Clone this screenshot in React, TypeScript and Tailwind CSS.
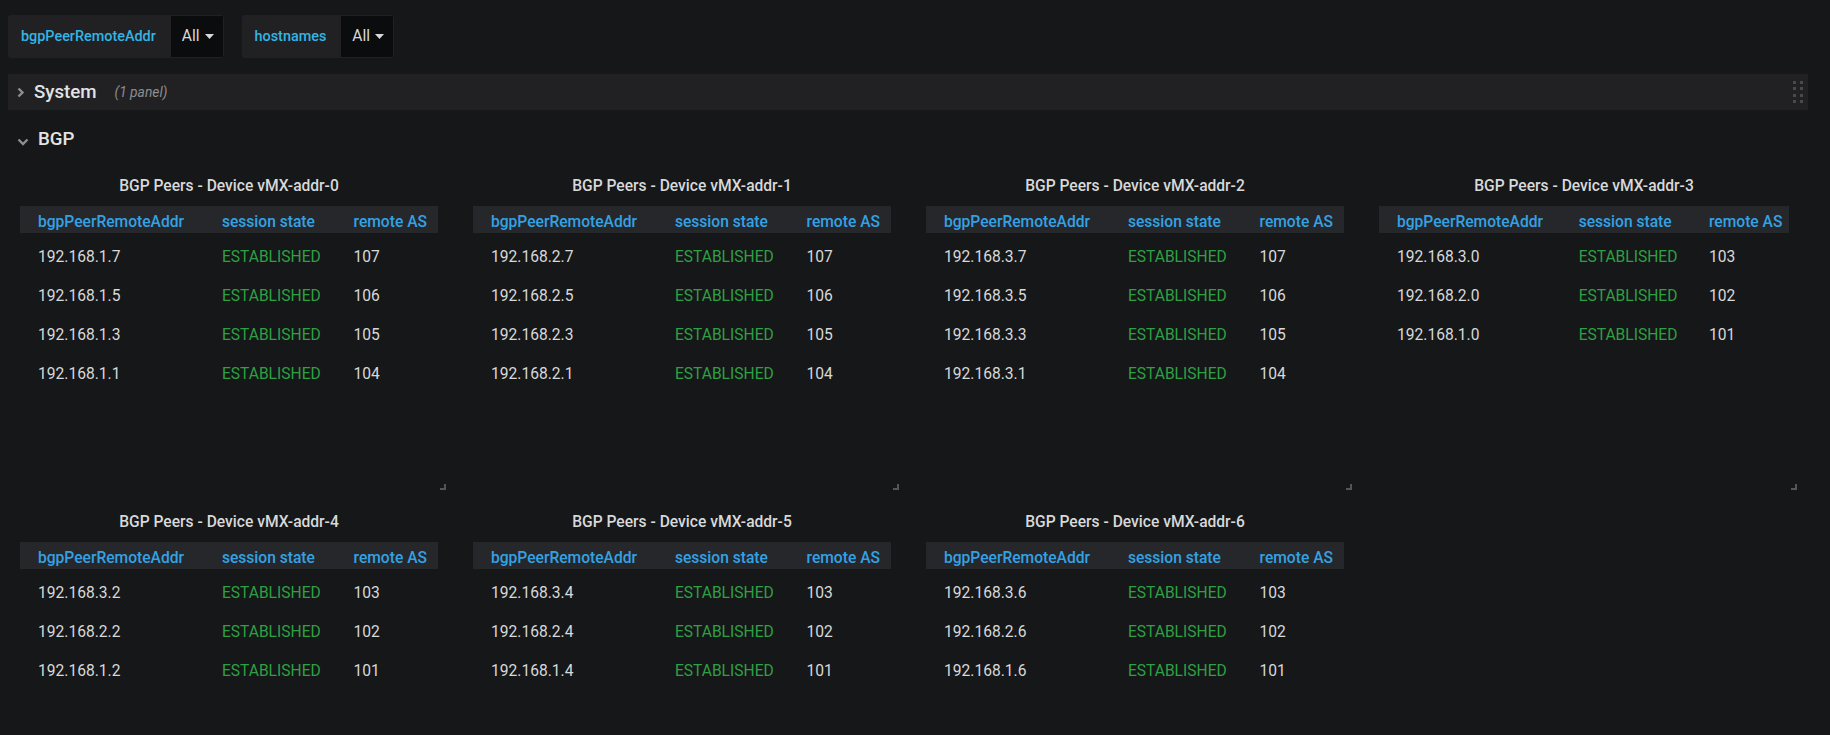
import React from 'react'

type Peer = { addr: string; as: string }

type Panel = { name: string; peers: Peer[] }

const panels: Panel[] = [
  {
    name: 'vMX-addr-0',
    peers: [
      { addr: '192.168.1.7', as: '107' },
      { addr: '192.168.1.5', as: '106' },
      { addr: '192.168.1.3', as: '105' },
      { addr: '192.168.1.1', as: '104' },
    ],
  },
  {
    name: 'vMX-addr-1',
    peers: [
      { addr: '192.168.2.7', as: '107' },
      { addr: '192.168.2.5', as: '106' },
      { addr: '192.168.2.3', as: '105' },
      { addr: '192.168.2.1', as: '104' },
    ],
  },
  {
    name: 'vMX-addr-2',
    peers: [
      { addr: '192.168.3.7', as: '107' },
      { addr: '192.168.3.5', as: '106' },
      { addr: '192.168.3.3', as: '105' },
      { addr: '192.168.3.1', as: '104' },
    ],
  },
  {
    name: 'vMX-addr-3',
    peers: [
      { addr: '192.168.3.0', as: '103' },
      { addr: '192.168.2.0', as: '102' },
      { addr: '192.168.1.0', as: '101' },
    ],
  },
  {
    name: 'vMX-addr-4',
    peers: [
      { addr: '192.168.3.2', as: '103' },
      { addr: '192.168.2.2', as: '102' },
      { addr: '192.168.1.2', as: '101' },
    ],
  },
  {
    name: 'vMX-addr-5',
    peers: [
      { addr: '192.168.3.4', as: '103' },
      { addr: '192.168.2.4', as: '102' },
      { addr: '192.168.1.4', as: '101' },
    ],
  },
  {
    name: 'vMX-addr-6',
    peers: [
      { addr: '192.168.3.6', as: '103' },
      { addr: '192.168.2.6', as: '102' },
      { addr: '192.168.1.6', as: '101' },
    ],
  },
]

function Caret() {
  return (
    <svg width="9" height="5" viewBox="0 0 9 5" className="ml-[5px]">
      <path d="M0 0h9L4.5 5z" fill="#d8d9da" />
    </svg>
  )
}

function VariablePicker({ label }: { label: string }) {
  return (
    <div className="flex h-[43px] rounded-[3px] overflow-hidden">
      <div className="flex items-center bg-[#212124] pl-[13px] pr-[14px] text-[14.4px] font-medium text-[#33b5e5]">
        {label}
      </div>
      <div className="flex items-center bg-[#0b0c0e] border border-[#212124] pl-[11px] pr-[9px] text-[15.6px] text-[#d8d9da]">
        All
        <Caret />
      </div>
    </div>
  )
}

function BgpTable({ panel, last }: { panel: Panel; last: boolean }) {
  // the last column is a bit narrower, its columns shift slightly
  const c1 = last ? 'w-[44.3%]' : 'w-[44%]'
  const c2 = last ? 'w-[31.8%]' : 'w-[31.5%]'
  return (
    <div className="relative h-[322px] px-3 pr-[9px]">
      <div className="flex h-[38px] items-center justify-center text-[15.6px] font-medium text-[#d8d9da]">
        BGP Peers - Device {panel.name}
      </div>
      <div className="flex h-[27px] pt-[6px] items-center bg-[#26272a] text-[15.6px] font-medium text-[#33a2e5]">
        <div className={`${c1} pl-[18px]`}>bgpPeerRemoteAddr</div>
        <div className={`${c2} pl-[18px]`}>session state</div>
        <div className="flex-1 pl-[18px]">remote AS</div>
      </div>
      <div className="mt-[5px]">
        {panel.peers.map((p) => (
          <div key={p.addr} className="flex h-[39px] items-center text-[15.6px]">
            <div className={`${c1} pl-[18px] text-[#d8d9da]`}>{p.addr}</div>
            <div className={`${c2} pl-[18px] text-[#2ea043]`}>ESTABLISHED</div>
            <div className="flex-1 pl-[18px] text-[#d8d9da]">{p.as}</div>
          </div>
        ))}
      </div>
      {/* resize handle */}
      <div className="absolute right-[1px] bottom-0 w-[6px] h-[6px] border-r-2 border-b-2 border-[#555558]" />
    </div>
  )
}

export default function App() {
  return (
    <div className="min-h-screen bg-[#161719] font-['Roboto',sans-serif] text-[#d8d9da]">
      <div className="w-[1808px] pl-2 pt-[15px]">
        {/* Variables */}
        <div className="flex gap-[18px]">
          <VariablePicker label="bgpPeerRemoteAddr" />
          <VariablePicker label="hostnames" />
        </div>

        {/* Collapsed row */}
        <div className="mt-4 flex h-[36px] items-center bg-[#212124]">
          <svg width="8" height="11" viewBox="0 0 8 11" className="ml-[9px]">
            <path d="M1.5 1.5l4 4-4 4" stroke="#8e8e90" strokeWidth="2.4" fill="none" />
          </svg>
          <span className="ml-[9px] text-[18.7px] font-medium text-[#e3e3e4]">System</span>
          <span className="ml-[18px] text-[13.8px] italic text-[#8e8e90]">(1 panel)</span>
          <div className="ml-auto mr-[5px] grid grid-cols-2 gap-x-[4px] gap-y-[3.6px]">
            {Array.from({ length: 8 }).map((_, i) => (
              <div key={i} className="w-[3px] h-[3px] bg-[#4a4a4d]" />
            ))}
          </div>
        </div>

        {/* Expanded row */}
        <div className="flex h-[58px] items-center">
          <svg width="12" height="8" viewBox="0 0 12 8" className="ml-[9px] mt-[6px]">
            <path d="M1.5 1.5l4.5 4.5 4.5-4.5" stroke="#8e8e90" strokeWidth="2.4" fill="none" />
          </svg>
          <span className="ml-[9px] text-[18.7px] font-medium text-[#e3e3e4]">BGP</span>
        </div>

        {/* Panels */}
        <div className="grid grid-cols-[439px_439px_439px_431px] gap-x-[14px] gap-y-[14px]">
          {panels.map((p, i) => (
            <BgpTable key={p.name} panel={p} last={i % 4 === 3} />
          ))}
        </div>
      </div>
    </div>
  )
}
